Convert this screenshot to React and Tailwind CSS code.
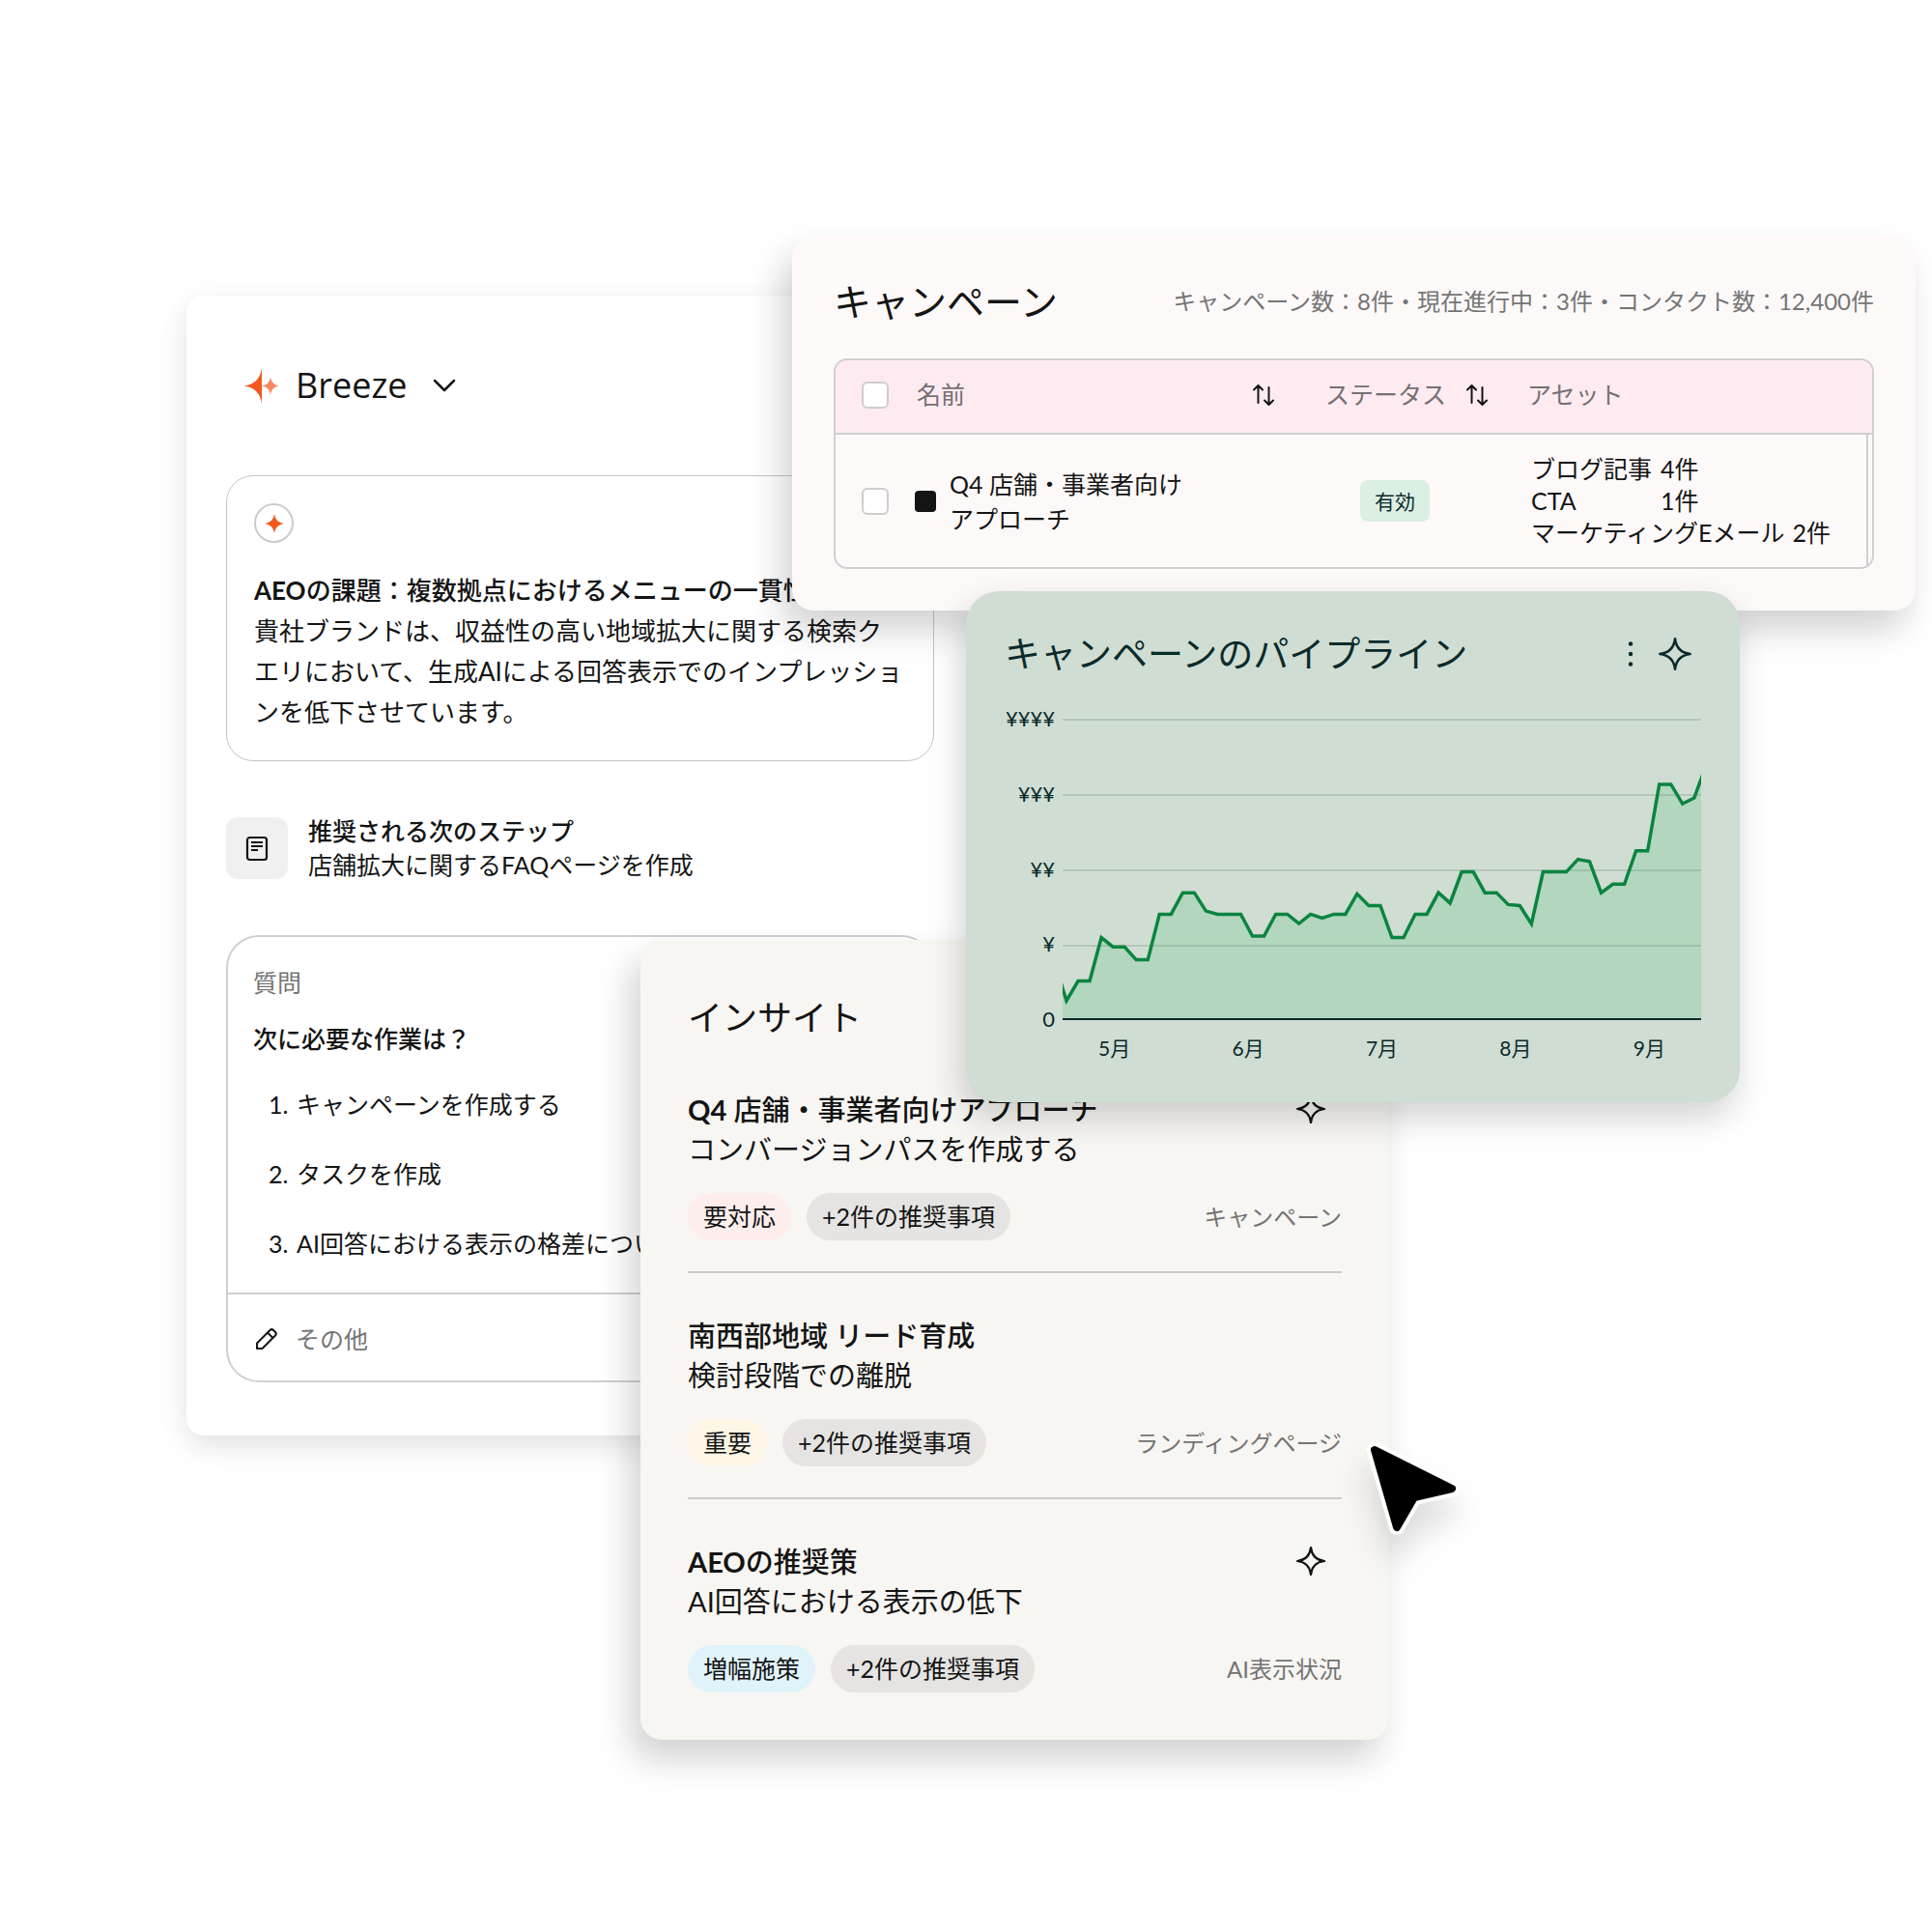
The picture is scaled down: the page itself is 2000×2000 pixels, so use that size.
import { ChevronDown } from "lucide-react";

const insights = [
  {
    lead: "Q4",
    title: " 店舗・事業者向けアプローチ",
    text: "コンバージョンパスを作成する",
    tag: "要対応",
    tagClass: "bg-[#fdeeec]",
    type: "キャンペーン",
    sparkle: true,
  },
  {
    lead: "",
    title: "南西部地域 リード育成",
    text: "検討段階での離脱",
    tag: "重要",
    tagClass: "bg-[#fdf5e6]",
    type: "ランディングページ",
    sparkle: false,
  },
  {
    lead: "AEO",
    title: "の推奨策",
    text: "AI回答における表示の低下",
    tag: "増幅施策",
    tagClass: "bg-[#e1f3fa]",
    type: "AI表示状況",
    sparkle: true,
  },
];

const questions = [
  "キャンペーンを作成する",
  "タスクを作成",
  "AI回答における表示の格差について",
];

const assets = [
  { name: "ブログ記事", count: "4件" },
  { name: "CTA", count: "1件" },
  { name: "マーケティングEメール", count: "2件" },
];

const yLabels = ["¥¥¥¥", "¥¥¥", "¥¥", "¥", "0"];
const months = ["5月", "6月", "7月", "8月", "9月"];

// pipeline values, 210 = one ¥ step
const pipeline = [
  158, 54, 109, 109, 230, 204, 204, 168, 168, 295, 295, 355, 355, 304, 295, 295,
  295, 234, 234, 295, 295, 269, 295, 284, 295, 295, 352, 319, 319, 230, 230,
  295, 295, 355, 326, 413, 413, 355, 355, 322, 319, 268, 413, 413, 413, 448,
  442, 355, 379, 379, 472, 472, 657, 657, 603, 619, 708,
];

const CHART_W = 1983;
const CHART_H = 840;
const STEP = 36.1;

const linePoints = pipeline
  .map((v, i) => `${(12 + (i - 1) * STEP).toFixed(1)},${CHART_H - v}`)
  .join(" ");
const areaPoints = `-24,${CHART_H} ${linePoints} 2010,${CHART_H}`;

function Sparkle({ className }) {
  return (
    <svg viewBox="0 0 32 32" fill="none" className={className} aria-hidden="true">
      <path
        d="M16 2C17 10.5 21.5 15 30 16C21.5 17 17 21.5 16 30C15 21.5 10.5 17 2 16C10.5 15 15 10.5 16 2Z"
        stroke="currentColor"
        strokeWidth="2.2"
        strokeLinejoin="round"
      />
    </svg>
  );
}

function SortButton({ label }) {
  return (
    <button aria-label={label} className="text-[#141414]">
      <svg
        viewBox="0 0 24 24"
        fill="none"
        stroke="currentColor"
        strokeWidth="2"
        strokeLinecap="round"
        strokeLinejoin="round"
        className="size-6"
        aria-hidden="true"
      >
        <path d="M6.5 20V2M2 6.5L6.5 2L11 6.5M17.5 4v18M13 17.5l4.5 4.5l4.5-4.5" />
      </svg>
    </button>
  );
}

function Checkbox({ label }) {
  return (
    <input
      type="checkbox"
      aria-label={label}
      className="block size-7 appearance-none rounded-md border-2 border-[#cfcccc] bg-white"
    />
  );
}

function BreezePanel() {
  return (
    <section className="col-[2/6] row-start-1 mt-[306px] self-start rounded-[18px] bg-white px-[41px] pt-[69px] pb-[55px] shadow-[0_10px_30px_rgba(0,0,0,0.12)]">
      <button className="ml-[18px] flex h-12 items-center font-['Open_Sans',sans-serif] text-4xl">
        <svg viewBox="0 0 37 37" className="mr-[17px] size-[37px]" aria-hidden="true">
          <path
            d="M19 0V37C17.5 26 11 19.5 0 18.5C11 17.5 17.5 11 19 0Z"
            fill="#f5571f"
          />
          <path
            d="M28 9C28.8 14.5 31.5 17.7 37 18.5C31.5 19.3 28.8 22.5 28 28C27.2 22.5 24.5 19.3 19 18.5C24.5 17.7 27.2 14.5 28 9Z"
            fill="#f58a63"
          />
        </svg>
        Breeze
        <ChevronDown className="ml-[18px] size-10" strokeWidth={1.5} />
      </button>

      <div className="mt-[69px] rounded-[28px] border border-[#c4c4c4] px-7 pt-7 pb-[29px]">
        <div className="flex size-[41px] items-center justify-center rounded-full border-2 border-[#cccccc]">
          <svg viewBox="0 0 20 20" className="size-5" aria-hidden="true">
            <path
              d="M10 0C11 6 14 9 20 10C14 11 11 14 10 20C9 14 6 11 0 10C6 9 9 6 10 0Z"
              fill="#f5571f"
            />
          </svg>
        </div>
        <h2 className="mt-7 text-[26px] leading-[42px] font-medium whitespace-nowrap">
          <b>AEO</b>の課題：複数拠点におけるメニューの一貫性
        </h2>
        <p className="text-[26px] leading-[42px] whitespace-nowrap">
          貴社ブランドは、収益性の高い地域拡大に関する検索ク
          <br />
          エリにおいて、生成AIによる回答表示でのインプレッショ
          <br />
          ンを低下させています。
        </p>
      </div>

      <div className="mt-[55px] flex items-center gap-[21px]">
        <div className="flex size-16 items-center justify-center rounded-xl bg-[#f0f0f0]">
          <svg
            viewBox="0 0 24 28"
            fill="none"
            stroke="currentColor"
            strokeWidth="2.2"
            className="h-7 w-6"
            aria-hidden="true"
          >
            <rect x="2" y="3" width="20" height="23" rx="2.5" />
            <path d="M6 8h12M6 12h12M6 16h7" />
          </svg>
        </div>
        <div className="text-[25px] leading-[35px]">
          <h3 className="font-medium">推奨される次のステップ</h3>
          <p>店舗拡大に関するFAQページを作成</p>
        </div>
      </div>

      <div className="mt-[55px] rounded-[34px] border-2 border-[#cfcfcf] text-[25px]">
        <div className="px-[26px] pt-[26px] pb-[14px]">
          <p className="leading-[42px] text-[#757575]">質問</p>
          <h3 className="mt-4 leading-[42px] font-medium">次に必要な作業は？</h3>
          <ol className="mt-3">
            {questions.map((q, i) => (
              <li key={q} className="flex h-18 items-center pl-4 whitespace-nowrap">
                <span className="w-[29px]">{i + 1}.</span>
                {q}
              </li>
            ))}
          </ol>
        </div>
        <label className="flex h-[91px] items-center gap-[18px] border-t-2 border-[#cfcfcf] px-7 pt-0.5">
          <svg
            viewBox="0 0 24 24"
            fill="none"
            stroke="currentColor"
            strokeWidth="2"
            strokeLinejoin="round"
            className="size-6"
            aria-hidden="true"
          >
            <path d="M2 22V16.5L15.5 3a2.500 2.500 0 0 1 3.500 0l2 2a2.500 2.500 0 0 1 0 3.500L7.500 22Z" />
            <path d="M13 5.500l5.500 5.500" />
          </svg>
          <input
            type="text"
            aria-label="その他"
            placeholder="その他"
            className="min-w-0 flex-1 bg-transparent pt-0.5 placeholder:text-[#757575] focus:outline-none"
          />
        </label>
      </div>
    </section>
  );
}

function InsightPanel() {
  return (
    <section className="col-[3/7] row-start-1 mt-[973px] self-start rounded-[22px] bg-[#f8f6f2] px-[49px] pt-[52px] pb-[49px] shadow-[-10px_20px_36px_rgba(0,0,0,0.18)]">
      <h2 className="text-4xl leading-[56px]">インサイト</h2>
      <ul className="mt-[47px] divide-y-2 divide-[#cccac7]">
        {insights.map((item) => (
          <li key={item.type} className="pt-11 pb-8 first:pt-0 last:pb-0">
            <div className="flex items-start justify-between text-[29px] leading-[41px] whitespace-nowrap">
              <div>
                <h3 className="font-medium">
                  {item.lead && <b>{item.lead}</b>}
                  {item.title}
                </h3>
                <p>{item.text}</p>
              </div>
              {item.sparkle && (
                <button aria-label="AI" className="mt-1 mr-4">
                  <Sparkle className="size-8" />
                </button>
              )}
            </div>
            <div className="mt-[25px] flex items-center gap-4 text-[25px] leading-[49px] whitespace-nowrap">
              <span className={`rounded-full px-4 ${item.tagClass}`}>{item.tag}</span>
              <span className="rounded-full bg-[#e5e4e2] px-4">+2件の推奨事項</span>
              <span className="ml-auto text-2xl leading-[49px] text-[#757472]">
                {item.type}
              </span>
            </div>
          </li>
        ))}
      </ul>
    </section>
  );
}

function CampaignPanel() {
  return (
    <section className="col-[4/9] row-start-1 mt-[244px] self-start rounded-[22px] bg-[#fef9f9] px-[43px] pt-10 pb-[43px] shadow-[-10px_20px_36px_rgba(0,0,0,0.18)]">
      <div className="flex h-14 items-center justify-between whitespace-nowrap">
        <h2 className="text-[39px] leading-none">キャンペーン</h2>
        <p className="text-2xl text-[#757575]">
          キャンペーン数：8件・現在進行中：3件・コンタクト数：12,400件
        </p>
      </div>
      <div className="mt-[31px] overflow-hidden rounded-[14px] border-2 border-[#d2cecf]">
        <table className="w-full table-fixed text-left text-[25px] whitespace-nowrap">
          <colgroup>
            <col className="w-[82px]" />
            <col />
            <col className="w-[209px]" />
            <col className="w-[352px]" />
            <col className="w-[5px]" />
          </colgroup>
          <thead>
            <tr className="h-[76px] border-b-2 border-[#d2cecf] bg-[#feebf1] text-[#757072]">
              <th className="pb-1 pl-[27px]">
                <Checkbox label="すべて選択" />
              </th>
              <th className="pb-1 font-normal">
                <div className="flex items-center justify-between pr-[52px] pl-0.5">
                  名前
                  <SortButton label="名前で並べ替え" />
                </div>
              </th>
              <th className="pb-1 font-normal">
                <div className="flex items-center gap-5">
                  ステータス
                  <SortButton label="ステータスで並べ替え" />
                </div>
              </th>
              <th className="pb-1 font-normal" colSpan={2}>
                アセット
              </th>
            </tr>
          </thead>
          <tbody>
            <tr className="h-[138px]">
              <td className="pl-[27px]">
                <Checkbox label="Q4 店舗・事業者向けアプローチ" />
              </td>
              <td>
                <div className="flex items-center gap-[14px] leading-9">
                  <span className="size-[22px] rounded bg-[#141414]" />
                  <span>
                    Q4 店舗・事業者向け
                    <br />
                    アプローチ
                  </span>
                </div>
              </td>
              <td className="pl-9">
                <span className="inline-block rounded-lg bg-[#dcefe3] px-[15px] align-middle text-[21px] leading-[43px] text-[#0a2b2b]">
                  有効
                </span>
              </td>
              <td className="pl-1 leading-[33px]">
                <ul>
                  {assets.map((a) => (
                    <li key={a.name} className="flex gap-2">
                      <span className="min-w-[126px]">{a.name}</span>
                      <span>{a.count}</span>
                    </li>
                  ))}
                </ul>
              </td>
              <td className="border-l-2 border-[#d2cecf]" />
            </tr>
          </tbody>
        </table>
      </div>
    </section>
  );
}

function PipelinePanel() {
  return (
    <section className="col-[5/8] row-start-1 mt-[612px] self-start rounded-[34px] bg-[#d0ddd2] px-10 pt-[47px] pb-[41px] text-[#0a2b2b] shadow-[-4px_16px_36px_rgba(0,0,0,0.18)]">
      <div className="flex h-9 items-center">
        <h2 className="text-[37px] leading-9 whitespace-nowrap">キャンペーンのパイプライン</h2>
        <button aria-label="メニュー" className="ml-auto">
          <svg viewBox="0 0 8 32" fill="currentColor" className="h-8 w-2" aria-hidden="true">
            <circle cx="4" cy="5.5" r="2.2" />
            <circle cx="4" cy="16" r="2.2" />
            <circle cx="4" cy="26.5" r="2.2" />
          </svg>
        </button>
        <button aria-label="AI" className="mr-[9px] ml-6">
          <Sparkle className="size-9" />
        </button>
      </div>
      <div className="mt-[37px] flex gap-2 text-[22px] leading-6">
        <div className="flex h-[335px] w-[52px] flex-col justify-between text-right">
          {yLabels.map((label) => (
            <span key={label}>{label}</span>
          ))}
        </div>
        <div className="min-w-0 flex-1 pt-3">
          <svg
            viewBox={`0 0 ${CHART_W} ${CHART_H}`}
            preserveAspectRatio="none"
            className="h-[312px] w-full"
            aria-label="キャンペーンのパイプライン"
          >
            <polygon points={areaPoints} fill="#b2d7be" />
            {[3, 213, 423, 633].map((y) => (
              <line
                key={y}
                x1="0"
                x2={CHART_W}
                y1={y}
                y2={y}
                stroke="#0a2b2b"
                strokeOpacity="0.13"
                strokeWidth="2"
                vectorEffect="non-scaling-stroke"
              />
            ))}
            <polyline
              points={linePoints}
              fill="none"
              stroke="#0b843f"
              strokeWidth="3.5"
              vectorEffect="non-scaling-stroke"
            />
            <line
              x1="0"
              x2={CHART_W}
              y1={CHART_H - 3}
              y2={CHART_H - 3}
              stroke="#0a2b2b"
              strokeWidth="2"
              vectorEffect="non-scaling-stroke"
            />
          </svg>
          <div className="mt-[14px] flex justify-between px-[37px] text-[21px] leading-[30px]">
            {months.map((m) => (
              <span key={m}>{m}</span>
            ))}
          </div>
        </div>
      </div>
    </section>
  );
}

function Cursor() {
  return (
    <svg
      viewBox="0 0 96 96"
      className="z-10 col-[7/8] row-start-1 mt-[1493px] -ml-[23px] size-24 drop-shadow-[0_24px_16px_rgba(0,0,0,0.14)]"
      strokeLinejoin="round"
      aria-hidden="true"
    >
      <path d="M8 8L88 48L49 57L31 88Z" fill="#fff" stroke="#fff" strokeWidth="16" />
      <path d="M8 8L88 48L49 57L31 88Z" fill="#000" stroke="#000" strokeWidth="8" />
    </svg>
  );
}

export default function App() {
  return (
    <main
      lang="ja"
      className="grid min-h-screen grid-cols-[minmax(0,193fr)_minmax(0,470fr)_minmax(0,157fr)_minmax(0,180fr)_minmax(0,8fr)_minmax(0,430fr)_minmax(0,363fr)_minmax(0,182fr)_minmax(0,17fr)] overflow-hidden bg-white font-['Lato','Noto_Sans_CJK_JP',sans-serif] text-[#141414]"
    >
      <BreezePanel />
      <InsightPanel />
      <CampaignPanel />
      <PipelinePanel />
      <Cursor />
    </main>
  );
}
